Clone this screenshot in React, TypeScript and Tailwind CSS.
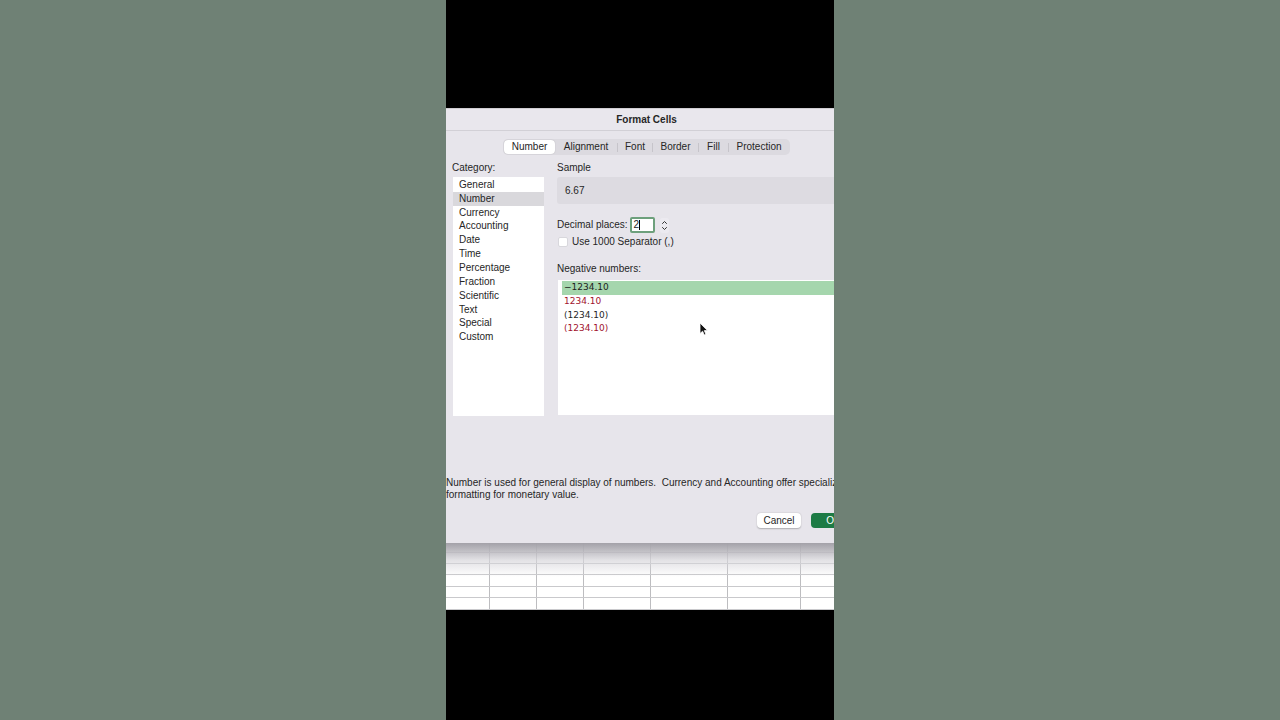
import React from "react";

const categories = [
  "General",
  "Number",
  "Currency",
  "Accounting",
  "Date",
  "Time",
  "Percentage",
  "Fraction",
  "Scientific",
  "Text",
  "Special",
  "Custom",
];

const tabs = [
  { label: "Number", w: "w-[51px]", sel: true, sep: false },
  { label: "Alignment", w: "w-[62px]", sel: false, sep: false },
  { label: "Font", w: "w-[34px]", sel: false, sep: true },
  { label: "Border", w: "w-[45px]", sel: false, sep: true },
  { label: "Fill", w: "w-[29px]", sel: false, sep: true },
  { label: "Protection", w: "w-[60px]", sel: false, sep: true },
];

const negs = [
  { t: "\u22121234.10", red: false, sel: true },
  { t: "1234.10", red: true, sel: false },
  { t: "(1234.10)", red: false, sel: false },
  { t: "(1234.10)", red: true, sel: false },
];

const colW = ["w-[44px]", "w-[47px]", "w-[47px]", "w-[67px]", "w-[77px]", "w-[73px]", "flex-1"];
const rowH = ["h-[10px]", "h-[11px]", "h-[11px]", "h-[12px]", "h-[11px]", "h-[12px]"];

export default function App() {
  return (
    <div className="w-full h-[720px] bg-[#6f8175] flex justify-center font-['Liberation_Sans',Arial,sans-serif] text-[#262626]">
      <div className="w-[388px] h-full bg-black flex flex-col overflow-hidden">
        <div className="h-[108px] shrink-0" />
        {/* Dialog */}
        <div className="h-[435px] shrink-0 overflow-hidden relative">
          <div className="w-[443px] h-full ml-[-21px] bg-[#e7e5eb] flex flex-col border-t border-[#cfcdd2]">
            {/* Title */}
            <div className="h-[22px] flex items-center justify-center border-b border-[#d2d0d6] bg-[#e9e7ed]">
              <span className="text-[10px] font-bold leading-none">Format Cells</span>
            </div>
            {/* Tabs */}
            <div className="mt-[8px] flex justify-center">
              <div className="h-[16px] flex items-center rounded-[5px] bg-[#dcdae0] px-[1px]">
                {tabs.map((t) => (
                  <div key={t.label} className="flex items-center h-full">
                    {t.sep && <div className="w-px h-[9px] bg-[#c6c4ca]" />}
                    <div
                      className={`${t.w} h-[14px] flex items-center justify-center text-[10px] leading-none rounded-[4px] ${
                        t.sel ? "bg-white shadow-[0_0_1px_rgba(0,0,0,0.25)]" : ""
                      }`}
                    >
                      {t.label}
                    </div>
                  </div>
                ))}
              </div>
            </div>
            {/* Content */}
            <div className="mt-[6px] flex pl-[27px]">
              {/* Left column */}
              <div className="w-[92px] flex flex-col">
                <div className="h-[12px] pt-[1px] text-[10px] leading-[12px]">Category:</div>
                <div className="mt-[4px] ml-[1px] w-[91px] h-[239px] bg-white flex flex-col pt-[1px]">
                  {categories.map((c) => (
                    <div
                      key={c}
                      className={`h-[13.85px] flex items-center pl-[6px] text-[10px] leading-none ${
                        c === "Number" ? "bg-[#d9d8dc]" : ""
                      }`}
                    >
                      {c}
                    </div>
                  ))}
                </div>
              </div>
              {/* Right column */}
              <div className="ml-[13px] flex-1 flex flex-col pr-[27px]">
                <div className="h-[12px] pt-[1px] text-[10px] leading-[12px]">Sample</div>
                <div className="mt-[4px] h-[27px] bg-[#dddbe1] rounded-[3px] flex items-center pl-[8px] text-[10px] leading-none">
                  6.67
                </div>
                <div className="mt-[13px] h-[16px] flex items-center">
                  <span className="text-[10px] leading-none">Decimal places:</span>
                  <div className="ml-[2px] w-[25px] h-[16px] border-[2px] border-[#6da07c] rounded-[2px] bg-white flex items-center pl-[2px] text-[10px] leading-none">
                    2<span className="w-px h-[10px] bg-black" />
                  </div>
                  <svg className="ml-[5px]" width="9" height="15" viewBox="0 0 9 15">
                    <rect x="0" y="0" width="9" height="15" rx="2.5" fill="#eceaf0" />
                    <path d="M2.5 5.5 L4.5 3.5 L6.5 5.5" fill="none" stroke="#333" strokeWidth="1" strokeLinecap="round" strokeLinejoin="round" />
                    <path d="M2.5 9.5 L4.5 11.5 L6.5 9.5" fill="none" stroke="#333" strokeWidth="1" strokeLinecap="round" strokeLinejoin="round" />
                  </svg>
                </div>
                <div className="mt-[4px] h-[10px] flex items-center">
                  <div className="ml-[1px] w-[10px] h-[10px] rounded-[2px] bg-white border border-[#d8d7dc]" />
                  <span className="ml-[4px] text-[10px] leading-none">Use 1000 Separator (,)</span>
                </div>
                <div className="mt-[16px] h-[12px] text-[10px] leading-[12px]">Negative numbers:</div>
                <div className="mt-[5px] ml-[1px] h-[135px] bg-white pl-[4px] pt-[1px] flex flex-col relative">
                  {negs.map((n, i) => (
                    <div
                      key={i}
                      className={`h-[13.7px] flex items-center pl-[2px] font-['DejaVu_Sans',sans-serif] text-[9px] leading-none ${
                        n.sel ? "bg-[#a5d6ad] text-[#1d1d1d]" : ""
                      } ${n.red ? "text-[#a1132d]" : ""}`}
                    >
                      {n.t}
                    </div>
                  ))}
                  {/* mouse cursor */}
                  <svg className="absolute left-[141px] top-[42px]" width="9" height="14" viewBox="0 0 9 14">
                    <path d="M1 1 L1 11.5 L3.6 9.2 L5.3 13 L6.9 12.3 L5.3 8.6 L8.5 8.6 Z" fill="#111" stroke="#fff" strokeWidth="0.8" strokeLinejoin="round" />
                  </svg>
                </div>
              </div>
            </div>
            {/* Description */}
            <div className="mt-[61px] pl-[21px] text-[10px] leading-[12px] whitespace-pre">
              <div>Number is used for general display of numbers.  Currency and Accounting offer specialized</div>
              <div>formatting for monetary value.</div>
            </div>
            {/* Buttons */}
            <div className="mt-[12px] flex justify-end pr-[12px] gap-[10px]">
              <div className="w-[44px] h-[15px] rounded-[4px] bg-white shadow-[0_0.5px_1.5px_rgba(0,0,0,0.25)] flex items-center justify-center text-[10px] leading-none">
                Cancel
              </div>
              <div className="w-[45px] h-[15px] rounded-[4px] bg-[#1d7b45] flex items-center justify-center text-[10px] leading-none text-white">
                OK
              </div>
            </div>
          </div>
        </div>
        {/* Spreadsheet grid */}
        <div className="relative bg-white shrink-0">
          {rowH.map((h, r) => (
            <div key={r} className={`${h} flex border-b border-[#c9c9cc]`}>
              {colW.map((w, c) => (
                <div key={c} className={`${w} h-full ${c < 6 ? "border-r border-[#bdbdc0]" : ""}`} />
              ))}
            </div>
          ))}
          <div className="absolute left-0 right-0 top-0 h-[34px] bg-gradient-to-b from-[#a3a1a8] via-[#d6d5da]/70 to-transparent" />
        </div>
      </div>
    </div>
  );
}
